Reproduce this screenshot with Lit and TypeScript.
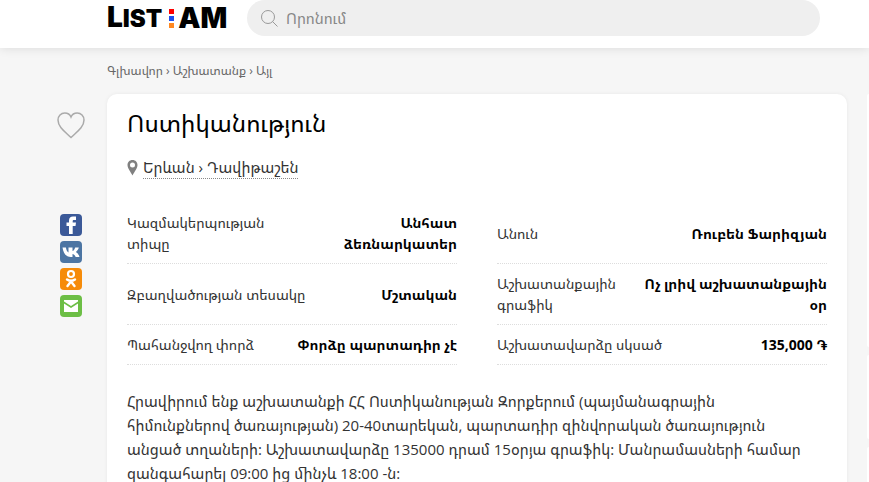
import { LitElement, html, css, svg } from "lit";
import { customElement } from "lit/decorators.js";

interface Attribute {
  label: string;
  value: string;
}

const attributes: Attribute[] = [
  { label: "Կազմակերպության տիպը", value: "Անհատ ձեռնարկատեր" },
  { label: "Անուն", value: "Ռուբեն Ֆարիզյան" },
  { label: "Զբաղվածության տեսակը", value: "Մշտական" },
  { label: "Աշխատանքային գրաֆիկ", value: "Ոչ լրիվ աշխատանքային օր" },
  { label: "Պահանջվող փորձ", value: "Փորձը պարտադիր չէ" },
  { label: "Աշխատավարձը սկսած", value: "135,000 ֏" },
];

const shares = [
  {
    name: "Facebook",
    color: "#3b5998",
    glyph: svg`<path fill="#fff" d="M9 20v-8H6.500V8.500H9V6.500C9 3.700 10.500 2.500 13 2.500h3V6h-2c-1 0-1.300.500-1.300 1.300v1.200H16l-.5 3.500h-2.800v8z"/>`,
  },
  {
    name: "VK",
    color: "#4c75a3",
    glyph: svg`<path fill="#fff" d="M10.800 16C6.300 16 3.300 12.400 2.500 6.500h3.400c.4 2.600 1.300 4.400 2.600 5V6.500h4v3.600c1.100-.3 2.100-1.700 2.700-3.600h3.600c-.5 2-1.600 3.500-2.900 4.400 1.500.8 2.900 2.500 3.600 5.100h-3.800c-.6-1.600-1.700-2.700-3.200-3V16z"/>`,
  },
  {
    name: "Odnoklassniki",
    color: "#f68b09",
    glyph: svg`<circle cx="11" cy="6" r="3" fill="none" stroke="#fff" stroke-width="2.200"/><path d="M7 11.500c2.500 1.700 5.500 1.700 8 0M7.500 18l3.500-4.500 3.500 4.500M11 12.500v1.500" fill="none" stroke="#fff" stroke-width="2.400" stroke-linecap="round" stroke-linejoin="round"/>`,
  },
  {
    name: "Email",
    color: "#6cbe45",
    glyph: svg`<path fill="#fff" d="M4 5h14v1.500l-7 4.500-7-4.500zM4 8.500l7 4.500 7-4.500V17H4z"/>`,
  },
];

@customElement("app-root")
export class AppRoot extends LitElement {
  static styles = css`
    :host {
      display: block;
      height: 100vh;
      overflow: hidden;
      background: #f6f6f6;
      color: #333;
      font: 14px/21px "Open Sans", "Noto Sans Armenian", "Noto Sans", sans-serif;
    }
    a {
      color: inherit;
      text-decoration: none;
    }
    header {
      display: flex;
      align-items: flex-start;
      box-sizing: border-box;
      height: 48px;
      padding: 0 49px 0 107px;
      background: #fff;
      box-shadow: 0 0 10px rgba(0, 0, 0, 0.12);
    }
    .logo {
      display: flex;
      flex: 0 0 140px;
      align-items: center;
      height: 36px;
      color: #000;
      font: 900 24px/36px Inter, Lato, sans-serif;
    }
    .initial {
      font-size: 28px;
    }
    .dots {
      display: grid;
      gap: 2px;
      margin: 0 4px 0 7px;
    }
    .dot {
      width: 5px;
      height: 5px;
    }
    .red {
      background: #f00;
    }
    .blue {
      background: #1d4ef0;
    }
    .orange {
      background: #ff8820;
    }
    .zone {
      font-size: 28px;
    }
    .search {
      display: flex;
      flex: 1;
      align-items: center;
      gap: 8px;
      height: 36px;
      padding: 0 14px;
      border-radius: 18px;
      background: #efefef;
    }
    .search svg {
      flex: none;
    }
    .search input {
      flex: 1;
      min-width: 0;
      padding: 0;
      border: 0;
      outline: 0;
      background: none;
      color: #333;
      font: inherit;
      font-size: 15px;
    }
    .search input::placeholder {
      color: #888;
      opacity: 1;
    }
    .crumbs {
      padding: 14px 0 14px 107px;
      color: #666;
      font-size: 12px;
      line-height: 18px;
    }
    .layout {
      display: flex;
      padding-left: 57px;
    }
    .tools {
      display: flex;
      flex: 0 0 50px;
      flex-direction: column;
      align-items: flex-start;
    }
    button {
      display: block;
      padding: 0;
      border: 0;
      background: none;
      cursor: pointer;
    }
    .favorite {
      height: 28px;
      margin: 17px 0 75px;
    }
    .shares {
      display: grid;
      gap: 5px;
      padding-left: 3px;
    }
    .share {
      width: 22px;
      height: 22px;
    }
    svg {
      display: block;
    }
    .card {
      flex: 1;
      min-width: 0;
      box-sizing: border-box;
      padding: 13px 20px 20px;
      border-radius: 10px;
      background: #fff;
      box-shadow: 0 0 4px rgba(0, 0, 0, 0.06);
    }
    h1 {
      margin: 0;
      color: #000;
      font-size: 24px;
      font-weight: 400;
      line-height: 32px;
    }
    .place {
      display: flex;
      align-items: center;
      gap: 5px;
      margin: 18px 0 24px;
      font-size: 15px;
      line-height: 21px;
    }
    .place a {
      border-bottom: 1px dotted #888;
    }
    dl {
      display: grid;
      grid-template-columns: 1fr 1fr;
      column-gap: 40px;
      margin: 0;
    }
    .row {
      display: flex;
      align-items: center;
      justify-content: space-between;
      gap: 10px;
      padding: 9px 0;
      border-bottom: 1px dotted #ddd;
    }
    dt {
      flex-shrink: 3;
    }
    dd {
      margin: 0;
      color: #000;
      font-weight: 700;
      text-align: right;
    }
    .description {
      margin: 24px 0 0;
      padding-right: 8px;
      font-size: 15px;
      line-height: 24px;
    }
    .side {
      display: flex;
      flex: 0 0 2px;
      flex-direction: column;
      gap: 8px;
      margin-left: 20px;
    }
    .panel {
      height: 84px;
      border-radius: 4px 0 0 4px;
      background: #fff;
    }
    .tall {
      height: 253px;
    }
  `;

  render() {
    return html`
      <header>
        <a class="logo" href="/" aria-label="List.am">
          <span><span class="initial">L</span>IST</span>
          <span class="dots">
            <span class="dot red"></span>
            <span class="dot blue"></span>
            <span class="dot orange"></span>
          </span>
          <span class="zone">AM</span>
        </a>
        <label class="search">
          <svg width="17" height="17" viewBox="0 0 17 17" fill="none" stroke="#999" aria-hidden="true">
            <circle cx="7" cy="7" r="6.500" />
            <path d="M11.500 11.500l5 5" />
          </svg>
          <input type="search" placeholder="Որոնում" aria-label="Որոնում" />
        </label>
      </header>
      <nav class="crumbs">
        <a href="#home">Գլխավոր</a> › <a href="#jobs">Աշխատանք</a> › <a href="#other">Այլ</a>
      </nav>
      <div class="layout">
        <div class="tools">
          <button class="favorite" aria-label="Favorite">
            <svg width="28" height="28" viewBox="0 0 28 28" fill="none" stroke="#aaa" stroke-width="1.500">
              <path d="M14 26.500C9 21.500 1 16.500 1 9 1 5 4 2 7.800 2c2.800 0 5.200 1.600 6.200 4 1-2.400 3.400-4 6.200-4C24 2 27 5 27 9c0 7.500-8 12.500-13 17.500z" />
            </svg>
          </button>
          <div class="shares">
            ${shares.map(
              (s) => html`<a class="share" href="#share" aria-label=${s.name}>
                <svg width="22" height="22" viewBox="0 0 22 22">
                  <rect width="22" height="22" rx="4" fill=${s.color} />
                  ${s.glyph}
                </svg>
              </a>`
            )}
          </div>
        </div>
        <main class="card">
          <h1>Ոստիկանություն</h1>
          <div class="place">
            <svg width="11" height="16" viewBox="0 0 11 16" aria-hidden="true">
              <path fill="#808080" fill-rule="evenodd" d="M5.500 0C2.400 0 .5 2.300.5 5c0 3.500 3 6.500 5 10.500 2-4 5-7 5-10.500 0-2.700-1.900-5-5-5zm0 2.500a2.500 2.500 0 1 1 0 5 2.500 2.500 0 0 1 0-5z" />
            </svg>
            <a href="#map">Երևան › Դավիթաշեն</a>
          </div>
          <dl>
            ${attributes.map(
              (a) => html`<div class="row"><dt>${a.label}</dt><dd>${a.value}</dd></div>`
            )}
          </dl>
          <p class="description">
            Հրավիրում ենք աշխատանքի ՀՀ Ոստիկանության Զորքերում (պայմանագրային
            հիմունքներով ծառայության) 20-40տարեկան, պարտադիր զինվորական ծառայություն
            անցած տղաների: Աշխատավարձը 135000 դրամ 15օրյա գրաֆիկ: Մանրամասների համար
            զանգահարել 09:00 ից մինչև 18:00 -ն:
          </p>
        </main>
        <aside class="side">
          <div class="panel tall"></div>
          <div class="panel"></div>
          <div class="panel"></div>
        </aside>
      </div>
    `;
  }
}
